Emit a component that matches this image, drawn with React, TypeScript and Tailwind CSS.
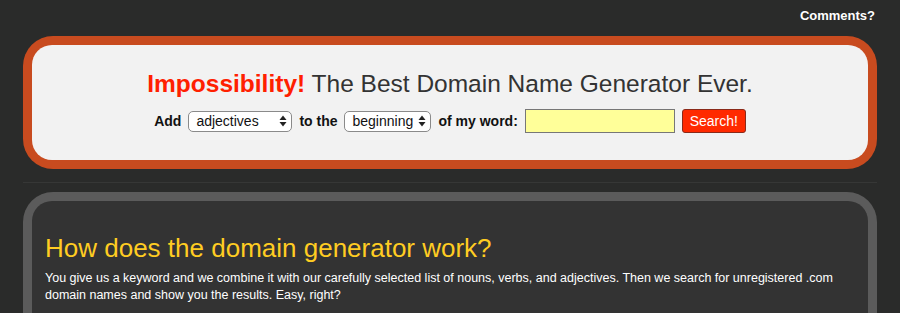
import { useState } from "react";

const Arrows = () => (
    <svg width="8" height="12" viewBox="0 0 8 12" className="absolute right-[5px] top-1/2 -translate-y-1/2 pointer-events-none">
        <path d="M4 0.5 L7.5 5 L0.5 5 Z" fill="#222" />
        <path d="M4 11.5 L7.5 7 L0.5 7 Z" fill="#222" />
    </svg>
);

function Picker({ value, options, width, onChange }: { value: string; options: string[]; width: string; onChange: (v: string) => void }) {
    return (
        <div className={`relative ${width} h-[21px]`}>
            <select
                value={value}
                onChange={(e) => onChange(e.target.value)}
                className="appearance-none w-full h-full bg-white border border-[#8a8a8a] rounded-[5px] pl-[7px] pr-3 text-[14px] font-normal leading-[19px] text-[#111] outline-none"
            >
                {options.map((o) => (
                    <option key={o} value={o}>{o}</option>
                ))}
            </select>
            <Arrows />
        </div>
    );
}

export default function App() {
    const [kind, setKind] = useState("adjectives");
    const [where, setWhere] = useState("beginning");
    const [word, setWord] = useState("");

    return (
        <div className="min-h-[313px] bg-[#2a2b2a] font-['Liberation_Sans',Arial,sans-serif] pb-10">
            <div className="flex justify-end pr-[25px] pt-2">
                <a href="#" className="text-white font-bold text-[13px] leading-4">Comments?</a>
            </div>

            <div className="mx-[23px] mt-3 bg-[#c84b1f] rounded-[30px] p-[9px]">
                <div className="bg-[#f2f2f2] rounded-[20px] h-[115px] pt-[25px] flex flex-col items-center">
                    <h1 className="text-[24.5px] leading-[28px] text-[#333]">
                        <span className="text-[#ff2000] font-bold">Impossibility!</span> The Best Domain Name Generator Ever.
                    </h1>
                    <div className="mt-[11px] flex items-center gap-[7px] text-[14px] font-bold text-[#111]">
                        <span>Add</span>
                        <Picker value={kind} options={["adjectives", "nouns", "verbs"]} width="w-[104px]" onChange={setKind} />
                        <span>to the</span>
                        <Picker value={where} options={["beginning", "end"]} width="w-[87px]" onChange={setWhere} />
                        <span>of my word:</span>
                        <input
                            value={word}
                            onChange={(e) => setWord(e.target.value)}
                            className="w-[150px] h-[24px] bg-[#ffff99] border border-[#777] outline-none px-1 text-[14px] font-normal"
                        />
                        <button className="w-[64px] h-[24px] bg-[#ff2a00] border border-[#8a2a1a] rounded-[3px] text-white font-normal text-[14px] leading-none">
                            Search!
                        </button>
                    </div>
                </div>
            </div>

            <div className="mx-[23px] mt-[13px] h-px bg-[#363736]" />

            <div className="mx-[23px] mt-[9px] bg-[#5b5b5b] rounded-[30px] p-[9px]">
                <div className="bg-[#333333] rounded-[20px] px-[13px] pt-[32px] pb-8">
                    <h2 className="text-[26px] leading-[30px] text-[#ffcc22]">How does the domain generator work?</h2>
                    <p className="mt-[7px] text-[12.5px] leading-[17px] text-white">
                        You give us a keyword and we combine it with our carefully selected list of nouns, verbs, and adjectives. Then we search for unregistered .com domain names and show you the results. Easy, right?
                    </p>
                </div>
            </div>
        </div>
    );
}
